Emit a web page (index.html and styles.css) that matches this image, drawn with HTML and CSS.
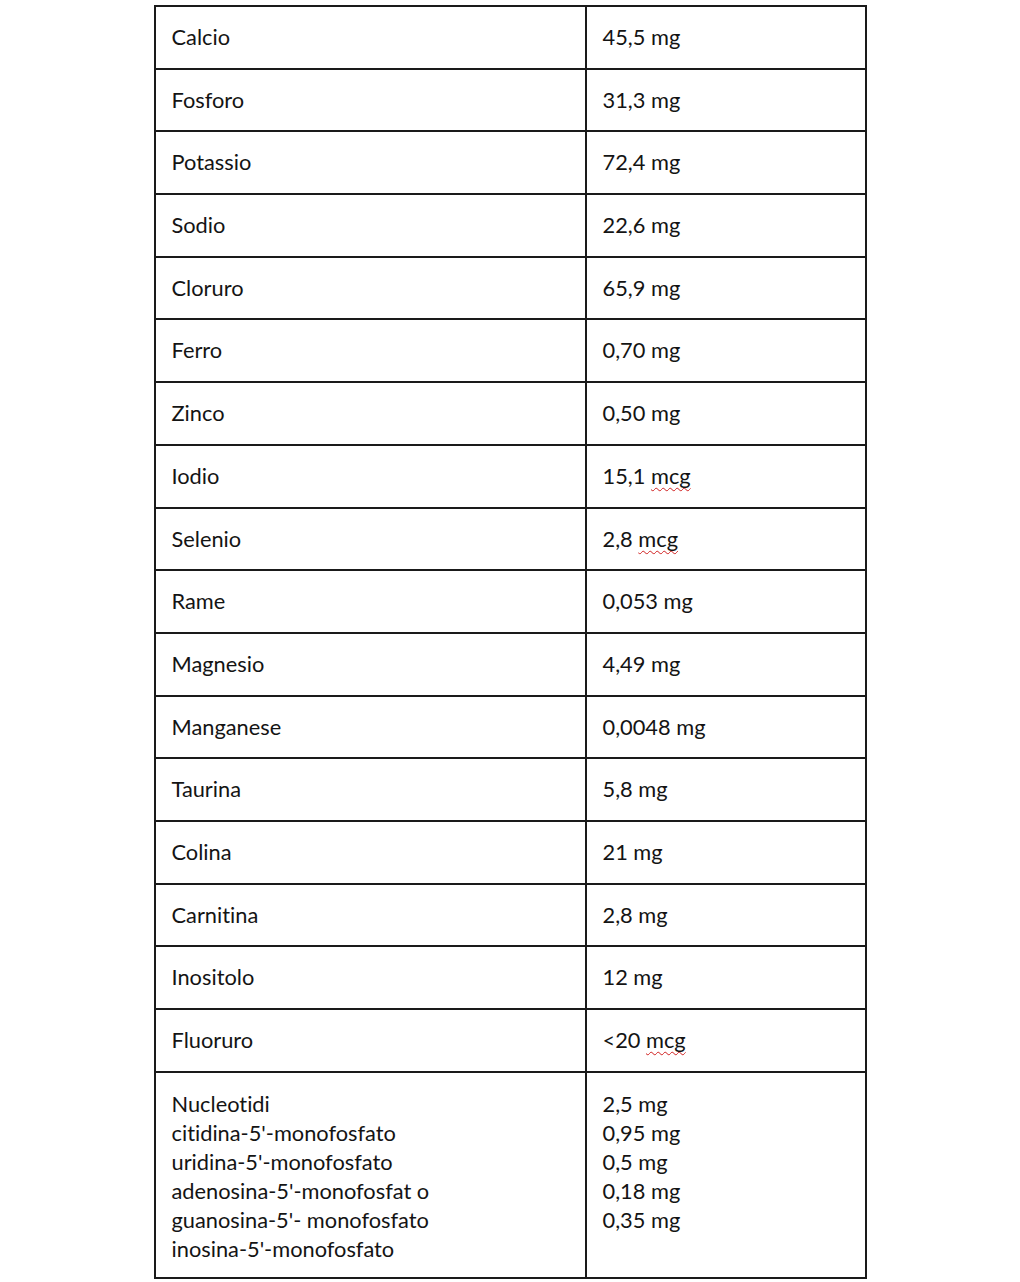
FILE: index.html
```html
<!DOCTYPE html>
<html lang="it">
<head>
<meta charset="utf-8">
<link rel="stylesheet" href="styles.css">
</head>
<body>
<table class="nutri">
  <tr><td class="name">Calcio</td><td class="val">45,5 mg</td></tr>
  <tr><td class="name">Fosforo</td><td class="val">31,3 mg</td></tr>
  <tr><td class="name">Potassio</td><td class="val">72,4 mg</td></tr>
  <tr><td class="name">Sodio</td><td class="val">22,6 mg</td></tr>
  <tr><td class="name">Cloruro</td><td class="val">65,9 mg</td></tr>
  <tr><td class="name">Ferro</td><td class="val">0,70 mg</td></tr>
  <tr><td class="name">Zinco</td><td class="val">0,50 mg</td></tr>
  <tr><td class="name">Iodio</td><td class="val">15,1 <span class="spell">mcg</span></td></tr>
  <tr><td class="name">Selenio</td><td class="val">2,8 <span class="spell">mcg</span></td></tr>
  <tr><td class="name">Rame</td><td class="val">0,053 mg</td></tr>
  <tr><td class="name">Magnesio</td><td class="val">4,49 mg</td></tr>
  <tr><td class="name">Manganese</td><td class="val">0,0048 mg</td></tr>
  <tr><td class="name">Taurina</td><td class="val">5,8 mg</td></tr>
  <tr><td class="name">Colina</td><td class="val">21 mg</td></tr>
  <tr><td class="name">Carnitina</td><td class="val">2,8 mg</td></tr>
  <tr><td class="name">Inositolo</td><td class="val">12 mg</td></tr>
  <tr><td class="name">Fluoruro</td><td class="val">&lt;20 <span class="spell">mcg</span></td></tr>
  <tr class="multi">
    <td class="name">Nucleotidi<br>citidina-5'-monofosfato<br>uridina-5'-monofosfato<br>adenosina-5'-monofosfat o<br>guanosina-5'- monofosfato<br>inosina-5'-monofosfato</td>
    <td class="val">2,5 mg<br>0,95 mg<br>0,5 mg<br>0,18 mg<br>0,35 mg</td>
  </tr>
</table>
</body>
</html>
```
FILE: styles.css
```css
html, body {
  margin: 0;
  padding: 0;
  background: #ffffff;
}
body {
  padding-top: 5px;
  font-family: "Lato", "Open Sans", "Liberation Sans", sans-serif;
  font-size: 21.8px;
  font-variant-ligatures: none;
  color: #141414;
}
.nutri {
  border-collapse: collapse;
  width: 711px;
  margin: 0 auto;
  table-layout: fixed;
}
.nutri td {
  border: 2px solid #1a1a1a;
  height: 62.7px;
  padding: 15px 16px 0 16px;
  vertical-align: top;
  line-height: 29px;
  box-sizing: border-box;
}
.nutri td.name {
  width: 431px;
}
.nutri td.val {
  width: 280px;
}
.nutri tr.multi td {
  height: 206px;
  padding-top: 16px;
}
.spell {
  text-decoration: underline wavy #d02020;
  text-decoration-thickness: 1px;
  text-underline-offset: 3px;
  text-decoration-skip-ink: none;
}
```
